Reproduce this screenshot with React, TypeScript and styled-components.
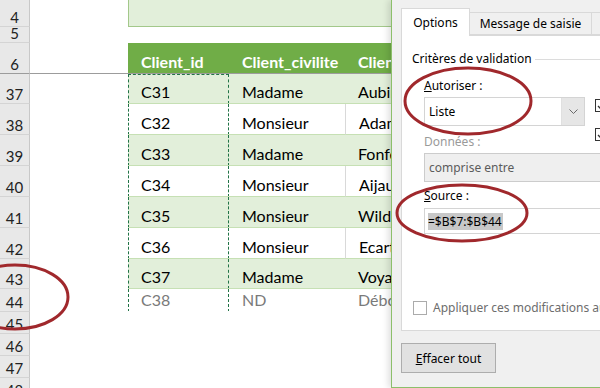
import styled, { createGlobalStyle } from "styled-components";

const GlobalStyle = createGlobalStyle`
  html, body {
    margin: 0;
    padding: 0;
  }
  body {
    width: 600px;
    height: 388px;
    overflow: hidden;
    background: #fff;
  }
`

const Page = styled.div`
  position: relative;
  width: 600px;
  height: 388px;
  overflow: hidden;
  font-family: Lato, "Liberation Sans", sans-serif;
`

const Sheet = styled.div`
  display: flex;
  flex-direction: column;
`

const SheetRow = styled.div<{ $h: number }>`
  display: flex;
  height: ${p => p.$h}px;
`

const RowHead = styled.div<{ $freeze?: boolean }>`
  width: 30px;
  flex: none;
  box-sizing: border-box;
  background: #e8e8e8;
  border-right: 1px solid #c8c8c8;
  border-bottom: 1px solid ${p => (p.$freeze ? "#9c9c9c" : "#d4d4d4")};
  display: flex;
  align-items: flex-end;
  justify-content: center;
  padding-bottom: 1px;
  font-size: 15px;
  line-height: 15px;
  color: #222;
  overflow: hidden;
`

const ColA = styled.div<{ $freeze?: boolean }>`
  width: 98px;
  flex: none;
  box-sizing: border-box;
  ${p => p.$freeze && "border-bottom: 1px solid #9c9c9c;"}
`

const Banner = styled.div`
  flex: 1;
  box-sizing: border-box;
  background: #e2efda;
  border-left: 1px solid #a3c88a;
  border-bottom: 1px solid #a3c88a;
`

type Band = "head" | "green" | "white" | "ghost"

const bandBg: Record<Band, string> = {
  head: "#70ad47",
  green: "#e2efda",
  white: "#ffffff",
  ghost: "#ffffff",
}

const bandColor: Record<Band, string> = {
  head: "#ffffff",
  green: "#000000",
  white: "#000000",
  ghost: "#7a7a7a",
}

const Cell = styled.div<{ $w?: number; $band: Band; $grid?: boolean; $freeze?: boolean }>`
  position: relative;
  ${p => (p.$w ? `width: ${p.$w}px; flex: none;` : "flex: 1; min-width: 0;")}
  box-sizing: border-box;
  background: ${p => bandBg[p.$band]};
  color: ${p => bandColor[p.$band]};
  font-weight: ${p => (p.$band === "head" ? 700 : 400)};
  font-size: 16px;
  line-height: 18px;
  padding: 0 0 2px 13px;
  display: flex;
  align-items: flex-end;
  white-space: nowrap;
  overflow: hidden;
  border-bottom: 1px solid
    ${p => (p.$freeze ? "#9c9c9c" : p.$band === "green" || p.$band === "white" ? "#c6e0b4" : "transparent")};
  ${p => p.$grid && "border-left: 1px solid #d9d9d9;"}
`

const SelectCell = styled(Cell)<{ $first?: boolean; $last?: boolean }>`
  &::after {
    content: "";
    position: absolute;
    inset: 0 0 -1px 0;
    border-left: 1px dashed #217346;
    border-right: 1px dashed #217346;
    ${p => p.$first && "border-top: 1px dashed #217346;"}
    ${p => p.$last && "border-bottom: 1px dashed #217346;"}
    pointer-events: none;
  }
`

/* dialog */

const Dialog = styled.div`
  position: absolute;
  top: 0;
  left: 391px;
  width: 240px;
  height: 388px;
  box-sizing: border-box;
  background: #f0f0f0;
  border-left: 1px solid #8cbf6a;
  border-bottom: 1px solid #8cbf6a;
  box-shadow: -3px 0 6px rgba(0, 0, 0, 0.12);
  padding: 8px 0 0 9px;
  display: flex;
  flex-direction: column;
  font-family: "Noto Sans", "Open Sans", sans-serif;
  font-size: 12px;
  color: #000;
  z-index: 2;
`

const Tabs = styled.div`
  display: flex;
  align-items: flex-end;
  height: 27px;
`

const Tab = styled.div<{ $active?: boolean; $w: number }>`
  position: relative;
  z-index: ${p => (p.$active ? 1 : 0)};
  width: ${p => p.$w}px;
  flex: none;
  box-sizing: border-box;
  height: ${p => (p.$active ? 28 : 23)}px;
  margin-bottom: ${p => (p.$active ? -1 : 0)}px;
  background: ${p => (p.$active ? "#fff" : "#f0f0f0")};
  border: 1px solid #d9d9d9;
  ${p => (p.$active ? "border-bottom: none;" : "border-left: none;")}
  display: flex;
  align-items: center;
  justify-content: center;
  padding-bottom: ${p => (p.$active ? 1 : 0)}px;
  white-space: nowrap;
`

const Panel = styled.div`
  height: 296px;
  box-sizing: border-box;
  background: #fff;
  border: 1px solid #d9d9d9;
  border-right: none;
  padding-left: 10px;
  display: flex;
  flex-direction: column;
`

const GroupTitle = styled.div`
  display: flex;
  align-items: center;
  margin-top: 15px;
  line-height: 16px;
  white-space: nowrap;

  &::after {
    content: "";
    flex: 1;
    height: 1px;
    margin-left: 3px;
    background: #dcdcdc;
  }
`

const Indent = styled.div`
  margin-left: 12px;
  display: flex;
  flex-direction: column;
`

const SettingsRow = styled.div`
  display: flex;
  gap: 10px;
  margin-top: 11px;
`

const LeftCol = styled.div`
  width: 161px;
  flex: none;
  display: flex;
  flex-direction: column;
`

const RightCol = styled.div`
  display: flex;
  flex-direction: column;
  gap: 16px;
  padding-top: 21px;
  margin-bottom: -15px;
`

const FieldLabel = styled.div<{ $disabled?: boolean; $gap?: number }>`
  line-height: 16px;
  margin-top: ${p => p.$gap ?? 0}px;
  color: ${p => (p.$disabled ? "#9a9a9a" : "#000")};
`

const Combo = styled.div<{ $disabled?: boolean }>`
  height: 29px;
  margin-top: 3px;
  box-sizing: border-box;
  display: flex;
  border: 1px solid ${p => (p.$disabled ? "#cccccc" : "#d4d4d4")};
  background: ${p => (p.$disabled ? "#efefef" : "#fff")};
  color: ${p => (p.$disabled ? "#5c5c5c" : "#000")};
`

const ComboText = styled.div`
  flex: 1;
  display: flex;
  align-items: center;
  padding-left: 4px;
`

const ComboButton = styled.div<{ $disabled?: boolean }>`
  width: 22px;
  flex: none;
  display: flex;
  align-items: center;
  justify-content: center;
  background: ${p => (p.$disabled ? "#e2e2e2" : "#e6e6e6")};
  border-left: 1px ${p => (p.$disabled ? "dotted #bdbdbd" : "solid #e0e0e0")};
`

const SourceInput = styled.div`
  width: 200px;
  height: 26px;
  margin-top: 4px;
  box-sizing: border-box;
  border: 1px solid #d4d4d4;
  border-right: none;
  display: flex;
  align-items: center;
  padding-left: 3px;
`

const Selected = styled.span`
  background: #c8c8c8;
  padding: 1px 1px 1px 0;
  line-height: 15px;
`

const CheckRow = styled.div`
  display: flex;
  align-items: center;
  gap: 6px;
  margin: auto 0 14px 1px;
  white-space: nowrap;
  color: #6d6d6d;
`

const CheckBox = styled.span<{ $dark?: boolean }>`
  width: ${p => (p.$dark ? 13 : 14)}px;
  height: ${p => (p.$dark ? 13 : 14)}px;
  flex: none;
  box-sizing: border-box;
  border: 1px solid ${p => (p.$dark ? "#333" : "#ababab")};
  background: #fff;
  display: flex;
  align-items: center;
  justify-content: center;
`

const ClearButton = styled.div`
  width: 95px;
  height: 30px;
  margin-top: 12px;
  box-sizing: border-box;
  background: #e1e1e1;
  border: 1px solid #adadad;
  display: flex;
  align-items: center;
  justify-content: center;
`

const Notes = styled.svg`
  position: absolute;
  inset: 0;
  z-index: 5;
  pointer-events: none;
`

const Chevron = () => (
  <svg width="9" height="5" viewBox="0 0 9 5">
    <polyline points="0.5,0.5 4.5,4.5 8.5,0.5" fill="none" stroke="#6a6a6a" strokeWidth="1" />
  </svg>
)

const Tick = () => (
  <svg width="9" height="8" viewBox="0 0 9 8">
    <polyline points="1,4 3.5,6.5 8,1" fill="none" stroke="#333" strokeWidth="1.3" />
  </svg>
)

type Row = { num: number; h: number; band: Band; b: string; c: string; d: string }

const rows: Row[] = [
  { num: 37, h: 30, band: "green", b: "C31", c: "Madame", d: "Aubin" },
  { num: 38, h: 31, band: "white", b: "C32", c: "Monsieur", d: "Adam" },
  { num: 39, h: 31, band: "green", b: "C33", c: "Madame", d: "Fonfec" },
  { num: 40, h: 31, band: "white", b: "C34", c: "Monsieur", d: "Aijaut" },
  { num: 41, h: 31, band: "green", b: "C35", c: "Monsieur", d: "Wilde" },
  { num: 42, h: 31, band: "white", b: "C36", c: "Monsieur", d: "Ecart" },
  { num: 43, h: 30, band: "green", b: "C37", c: "Madame", d: "Voyant" },
  { num: 44, h: 23, band: "ghost", b: "C38", c: "ND", d: "Débonnaire" },
]

const emptyRows = [45, 46, 47, 48]

const App = () => {
  return (
    <Page>
      <GlobalStyle/>
      <Sheet>
        <SheetRow $h={27}>
          <RowHead>4</RowHead>
          <ColA/>
          <Banner/>
        </SheetRow>
        <SheetRow $h={16}>
          <RowHead>5</RowHead>
        </SheetRow>
        <SheetRow $h={31}>
          <RowHead $freeze>6</RowHead>
          <ColA $freeze/>
          <Cell $w={101} $band="head" $freeze>Client_id</Cell>
          <Cell $w={116} $band="head" $freeze>Client_civilite</Cell>
          <Cell $band="head" $freeze>Client_nom</Cell>
        </SheetRow>
        {rows.map((r, i) => (
          <SheetRow key={r.num} $h={r.h}>
            <RowHead>{r.num}</RowHead>
            <ColA/>
            <SelectCell $w={101} $band={r.band} $first={i === 0} $last={i === rows.length - 1}>{r.b}</SelectCell>
            <Cell $w={116} $band={r.band}>{r.c}</Cell>
            <Cell $band={r.band} $grid={r.band === "white"}>{r.d}</Cell>
          </SheetRow>
        ))}
        {emptyRows.map(n => (
          <SheetRow key={n} $h={22}>
            <RowHead>{n}</RowHead>
          </SheetRow>
        ))}
      </Sheet>

      <Dialog>
        <Tabs>
          <Tab $active $w={69}>Options</Tab>
          <Tab $w={122}>Message de saisie</Tab>
          <Tab $w={110}>Alerte d'erreur</Tab>
        </Tabs>
        <Panel>
          <GroupTitle>Critères de validation</GroupTitle>
          <Indent>
            <SettingsRow>
              <LeftCol>
                <FieldLabel><u>A</u>utoriser :</FieldLabel>
                <Combo>
                  <ComboText>Liste</ComboText>
                  <ComboButton><Chevron/></ComboButton>
                </Combo>
              </LeftCol>
              <RightCol>
                <CheckBox $dark><Tick/></CheckBox>
                <CheckBox $dark><Tick/></CheckBox>
              </RightCol>
            </SettingsRow>
            <FieldLabel $disabled $gap={8}>Données :</FieldLabel>
            <Combo $disabled>
              <ComboText>comprise entre</ComboText>
              <ComboButton $disabled><Chevron/></ComboButton>
            </Combo>
            <FieldLabel $gap={6}><u>S</u>ource :</FieldLabel>
            <SourceInput><Selected>=$B$7:$B$44</Selected></SourceInput>
          </Indent>
          <CheckRow>
            <CheckBox/>
            Appliquer ces modifications aux autres cellules
          </CheckRow>
        </Panel>
        <ClearButton><span><u>E</u>ffacer tout</span></ClearButton>
      </Dialog>

      <Notes width="600" height="388" viewBox="0 0 600 388">
        <g fill="none" stroke="#a0282c" strokeWidth="3">
          <ellipse cx="468" cy="101" rx="63" ry="33"/>
          <ellipse cx="462" cy="213" rx="65" ry="28"/>
          <ellipse cx="15" cy="297" rx="53" ry="32"/>
        </g>
      </Notes>
    </Page>
  )
}

export default App
